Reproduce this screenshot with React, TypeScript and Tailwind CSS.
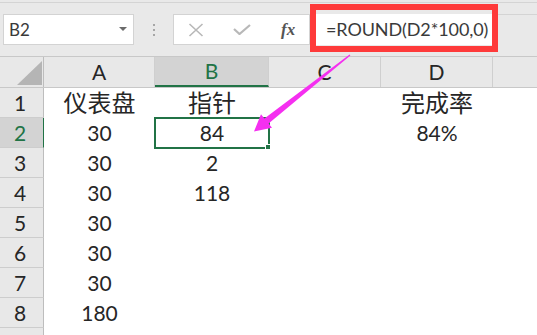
import React from "react";

type Row = { n: number; a?: string; b?: string; d?: string; cjk?: boolean };

const rows: Row[] = [
  { n: 1, a: "仪表盘", b: "指针", d: "完成率", cjk: true },
  { n: 2, a: "30", b: "84", d: "84%" },
  { n: 3, a: "30", b: "2" },
  { n: 4, a: "30", b: "118" },
  { n: 5, a: "30" },
  { n: 6, a: "30" },
  { n: 7, a: "30" },
  { n: 8, a: "180" },
  { n: 9 },
];

function Cell({ text, cjk, w }: { text?: string; cjk?: boolean; w: string }) {
  return (
    <div className={`${w} shrink-0 flex items-center justify-center text-[#262626] ${cjk ? "text-[24px]" : "text-[21px]"}`}>
      {text}
    </div>
  );
}

export default function App() {
  return (
    <div className="relative w-[537px] h-[335px] overflow-hidden bg-white font-['Lato','Noto_Sans_CJK_SC',sans-serif]">
      {/* toolbar */}
      <div className="h-[56px] bg-[#e9e9e9] pt-[2px]">
        <div className="h-full border-t border-[#d4d4d4] pt-[11px] flex items-start">
          {/* name box */}
          <div className="ml-[3px] w-[131px] h-[31px] bg-white border border-[#d3d3d3] flex items-center justify-between pl-[5px] pr-[6px]">
            <span className="text-[17px] text-[#3a3a3a]">B2</span>
            <svg width="8" height="5" viewBox="0 0 8 5"><path d="M0 0 L8 0 L4 4 Z" fill="#6b6b6b" /></svg>
          </div>
          {/* dots */}
          <div className="w-[39px] h-[31px] flex flex-col items-center justify-center gap-[3px]">
            <div className="w-[2px] h-[2px] bg-[#a6a6a6]" />
            <div className="w-[2px] h-[2px] bg-[#a6a6a6]" />
            <div className="w-[2px] h-[2px] bg-[#a6a6a6]" />
          </div>
          {/* buttons */}
          <div className="w-[137px] h-[31px] bg-white border border-[#d3d3d3] flex items-center">
            <svg className="ml-[14px]" width="16" height="14" viewBox="0 0 16 14">
              <path d="M1.5 1 L14.5 13 M14.5 1 L1.5 13" stroke="#b8b8b8" strokeWidth="1.6" fill="none" />
            </svg>
            <svg className="ml-[29px]" width="18" height="11" viewBox="0 0 18 11">
              <path d="M1 5 L6.5 10 L17 1" stroke="#b8b8b8" strokeWidth="2.2" fill="none" />
            </svg>
            <span className="ml-[30px] font-['Liberation_Serif',serif] italic font-bold text-[17px] text-[#555]">fx</span>
          </div>
          {/* formula input */}
          <div className="w-[186px] h-[31px] bg-white flex items-center pl-[16px]">
            <span className="text-[18px] text-[#3a3a3a] tracking-[-0.1px]">=ROUND(D2*100,0)</span>
          </div>
          <div className="flex-1 h-[31px] border-t border-[#d4d4d4]" />
        </div>
      </div>

      {/* column header */}
      <div className="flex h-[32px] border-t border-b border-[#c8c8c8] bg-[#e8e8e8]">
        <div className="relative w-[44px] shrink-0 border-r border-[#bdbdbd]">
          <svg className="absolute left-0 top-0" width="44" height="30" viewBox="0 0 44 30">
            <polygon points="17,28 42,4 42,28" fill="#b5b5b5" />
          </svg>
        </div>
        <div className="w-[111px] shrink-0 border-r border-[#cfcfcf] flex items-center justify-center text-[21px] text-[#262626]">A</div>
        <div className="w-[114px] shrink-0 border-r border-[#cfcfcf] border-b-2 border-b-[#217346] bg-[#d3d3d3] flex items-center justify-center text-[21px] text-[#217346]">B</div>
        <div className="w-[112px] shrink-0 border-r border-[#cfcfcf] flex items-center justify-center text-[21px] text-[#262626]">C</div>
        <div className="w-[112px] shrink-0 border-r border-[#cfcfcf] flex items-center justify-center text-[21px] text-[#262626]">D</div>
        <div className="flex-1" />
      </div>

      {/* rows */}
      {rows.map((r) => (
        <div key={r.n} className="flex h-[30px]">
          <div
            className={`w-[44px] shrink-0 border-b border-[#cdcdcd] flex items-center justify-center pr-[3px] text-[21px] ${
              r.n === 2 ? "bg-[#d3d3d3] border-r border-r-[#217346] text-[#217346]" : "bg-[#e8e8e8] border-r border-r-[#bdbdbd] text-[#262626]"
            }`}
          >
            {r.n < 9 ? r.n : null}
          </div>
          <Cell w="w-[111px]" text={r.a} cjk={r.cjk} />
          {r.n === 2 ? (
            <div className="relative w-[114px] shrink-0 flex items-center justify-center text-[21px] text-[#262626]">
              {r.b}
              <div className="absolute left-[-1px] top-[-1px] w-[116px] h-[32px] border-2 border-[#217346]" />
              <div className="absolute left-[110px] top-[26px] w-[6px] h-[6px] bg-[#217346] border border-white" />
            </div>
          ) : (
            <Cell w="w-[114px]" text={r.b} cjk={r.cjk} />
          )}
          <Cell w="w-[112px]" />
          <Cell w="w-[112px]" text={r.d} cjk={r.cjk} />
        </div>
      ))}

      {/* red annotation box */}
      <div className="absolute left-[310px] top-[4px] w-[188px] h-[48px] border-[6px] border-[#fe3a3a]" />

      {/* magenta arrow */}
      <svg className="absolute left-0 top-0 pointer-events-none" width="537" height="335" viewBox="0 0 537 335">
        <polygon
          points="350.4,55.5 268.6,123.6 272,127.8 254,131.5 261,114.3 264.4,118.4 349.6,54.5"
          fill="#f52ff0"
        />
      </svg>
    </div>
  );
}
